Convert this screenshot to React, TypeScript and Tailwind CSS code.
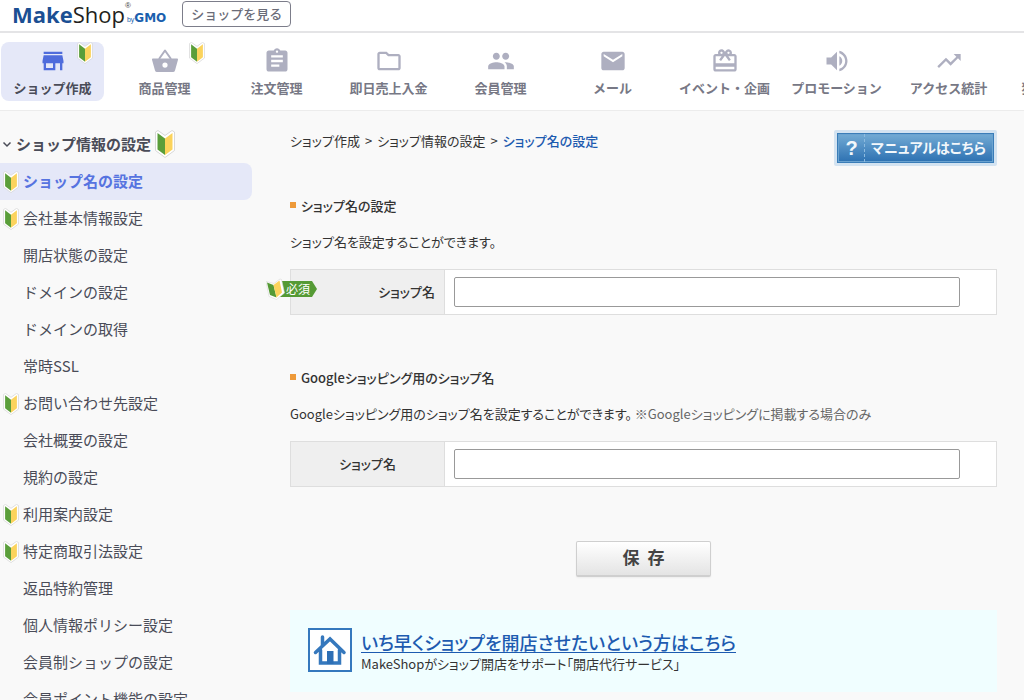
import type { ReactNode } from "react";
import {
  MdAssignment,
  MdCardGiftcard,
  MdEmail,
  MdExtension,
  MdOutlineFolder,
  MdPeople,
  MdStore,
  MdTrendingUp,
  MdVolumeUp,
} from "react-icons/md";

function BeginnerMark({ className }: { className: string }) {
  return (
    <svg viewBox="0 0 20 28" className={className} aria-hidden="true">
      <path d="M0.500 2 L3 0.500 L10 5.500 L17 0.500 L19.500 2 V20.500 L10 27.500 L0.500 20.500 Z" fill="#fff" stroke="#d4d4d4" strokeWidth="0.9" strokeLinejoin="round" />
      <path d="M2.500 3 L10 8.500 V25 L2.500 19.500 Z" fill="#5a9e3a" />
      <path d="M17.500 3 L10 8.500 V25 L17.500 19.500 Z" fill="#fbd35c" />
    </svg>
  );
}

function BasketIcon() {
  return (
    <svg viewBox="0 0 28 28" className="size-[1em]" fill="none" aria-hidden="true">
      <path d="M8 12 L14 3.500 L20 12" stroke="currentColor" strokeWidth="2" strokeLinejoin="round" />
      <path
        d="M2 11.500 H26 Q27.300 11.500 27 12.800 L24 23.500 Q23.500 25 22 25 H6 Q4.500 25 4 23.500 L1 12.800 Q0.700 11.500 2 11.500 Z M14 15.500 A2.600 2.600 0 1 0 14 20.700 A2.600 2.600 0 1 0 14 15.500 Z"
        fill="currentColor"
        fillRule="evenodd"
      />
    </svg>
  );
}

const navItems: { label: string; icon: ReactNode; mark?: boolean; active?: boolean }[] = [
  { label: "ショップ作成", icon: <MdStore />, mark: true, active: true },
  { label: "商品管理", icon: <BasketIcon />, mark: true },
  { label: "注文管理", icon: <MdAssignment /> },
  { label: "即日売上入金", icon: <MdOutlineFolder /> },
  { label: "会員管理", icon: <MdPeople /> },
  { label: "メール", icon: <MdEmail /> },
  { label: "イベント・企画", icon: <MdCardGiftcard /> },
  { label: "プロモーション", icon: <MdVolumeUp /> },
  { label: "アクセス統計", icon: <MdTrendingUp /> },
  { label: "独自機能設定", icon: <MdExtension /> },
];

const sideItems: { label: string; mark?: boolean; active?: boolean }[] = [
  { label: "ショップ名の設定", mark: true, active: true },
  { label: "会社基本情報設定", mark: true },
  { label: "開店状態の設定" },
  { label: "ドメインの設定" },
  { label: "ドメインの取得" },
  { label: "常時SSL" },
  { label: "お問い合わせ先設定", mark: true },
  { label: "会社概要の設定" },
  { label: "規約の設定" },
  { label: "利用案内設定", mark: true },
  { label: "特定商取引法設定", mark: true },
  { label: "返品特約管理" },
  { label: "個人情報ポリシー設定" },
  { label: "会員制ショップの設定" },
  { label: "会員ポイント機能の設定" },
];

function Logo() {
  return (
    <a href="#" className="flex whitespace-nowrap" aria-label="MakeShop byGMO">
      <span className="font-['Open_Sans','Noto_Sans',sans-serif] text-[22px] leading-7 text-[#231f20]">
        <b className="text-[#1b4f93]">Make</b>Shop
      </span>
      <span className="flex h-6 flex-col justify-between text-[#1b5fae]">
        <span className="font-['Liberation_Sans',sans-serif] text-[8px] leading-3 text-[#444]">®</span>
        <span className="flex items-baseline pl-0.5 leading-3">
          <span className="font-['Liberation_Sans',sans-serif] text-[7px]">by</span>
          <span className="font-['DejaVu_Sans',sans-serif] text-xs leading-3 font-bold">GMO</span>
        </span>
      </span>
    </a>
  );
}

function SectionTitle({ children }: { children: ReactNode }) {
  return (
    <h2 className="flex items-center gap-[5px] text-[13px] leading-5 font-medium">
      <span className="mb-0.5 size-1.5 bg-[#ee9a3a]" />
      {children}
    </h2>
  );
}

function RequiredBadge() {
  return (
    <span className="absolute top-[7px] -left-[25px] flex h-6 w-14 items-center" role="img" aria-label="必須">
      <svg viewBox="0 0 56 24" className="absolute inset-0 size-full" aria-hidden="true">
        <path d="M12 4 H46 L51 12 L46 20 H12 Z" fill="#559a35" />
        <path d="M0 4.500 L8 6.500 L14 2 L15.500 2.500 L18.500 16 L10.500 22.500 L3 19.500 Z" fill="#fff" stroke="#d8d8d8" strokeWidth="0.6" />
        <path d="M1 5.500 L7.500 8 L10.500 20.500 L4 18 Z" fill="#559a35" />
        <path d="M7.500 8 L13.500 3.500 L16 15.500 L10.500 20.500 Z" fill="#fbd35c" />
      </svg>
      <span className="relative pl-5 text-xs leading-6 font-normal text-white">必須</span>
    </span>
  );
}

function FieldTable({ id, required }: { id: string; required?: boolean }) {
  return (
    <table className="w-full border-collapse border border-[#dedede] bg-white">
      <tbody>
        <tr>
          <th
            scope="row"
            className={
              required
                ? "relative w-[154px] border border-[#dedede] bg-[#efefef] pr-[9px] text-right font-medium"
                : "relative w-[154px] border border-[#dedede] bg-[#efefef] text-center font-medium"
            }
          >
            {required && <RequiredBadge />}
            <label htmlFor={id} className="text-[13px]">ショップ名</label>
          </th>
          <td className="py-[7px] pr-9 pl-[9px]">
            <input id={id} type="text" className="block h-[30px] w-full rounded-xs border border-[#999] bg-white px-2 text-sm" />
          </td>
        </tr>
      </tbody>
    </table>
  );
}

export default function App() {
  return (
    <div className="flex h-screen flex-col overflow-hidden bg-[#f9f9f9] font-['Noto_Sans_CJK_JP',sans-serif] text-[#333]">
      <header className="flex h-[33px] shrink-0 items-start gap-4 border-b-2 border-[#e4e4e6] bg-white pl-3">
        <Logo />
        <button type="button" className="mt-px h-[26px] rounded border border-[#7c7d8a] px-2 text-[13px] leading-5 font-medium text-[#6b6c78]">
          ショップを見る
        </button>
      </header>

      <nav className="flex h-[78px] shrink-0 gap-[9px] overflow-hidden border-b border-[#ececec] bg-white pt-[9px] pl-px">
        {navItems.map((item) => (
          <a
            key={item.label}
            href="#"
            className={
              item.active
                ? "relative flex h-[59px] w-[103px] shrink-0 flex-col items-center rounded-lg bg-[#e5e8f8] pt-[5px] text-[#4a4c58]"
                : "relative flex h-[59px] w-[103px] shrink-0 flex-col items-center rounded-lg pt-[5px] text-[#777885]"
            }
          >
            <span className={item.active ? "text-[28px] text-[#4f6cdc]" : "text-[28px] text-[#aeafc0]"}>{item.icon}</span>
            <span className="text-[13px] leading-[25px] font-bold whitespace-nowrap">{item.label}</span>
            {item.mark && <BeginnerMark className="absolute top-0 right-[11px] h-[22px] w-4" />}
          </a>
        ))}
      </nav>

      <div className="flex min-h-0 flex-1">
        <aside className="w-[252px] shrink-0 pt-[15px]">
          <h2 className="flex h-[37px] items-center gap-1 pl-0.5 text-[15px] font-bold text-[#4a4c58]">
            <svg viewBox="0 0 10 10" className="size-2.5 fill-none stroke-[#4a4c58] stroke-[1.5]" aria-hidden="true">
              <path d="M1.500 2.500 L5 6 L8.500 2.500" />
            </svg>
            ショップ情報の設定
            <BeginnerMark className="mb-0.5 h-7 w-5" />
          </h2>
          <ul>
            {sideItems.map((item) => (
              <li key={item.label}>
                <a
                  href="#"
                  className={
                    item.active
                      ? "flex h-[37px] items-center gap-1 rounded-r-lg bg-[#e5e8f8] pl-[3px] text-[15px] font-bold text-[#5673e0]"
                      : "flex h-[37px] items-center gap-1 pl-[3px] text-[15px] text-[#4a4c58]"
                  }
                >
                  <span className="w-4">{item.mark && <BeginnerMark className="h-[22px] w-4" />}</span>
                  {item.label}
                </a>
              </li>
            ))}
          </ul>
        </aside>

        <main className="min-w-0 flex-1 pt-[19px] pr-[27px] pl-[38px] text-[13px] leading-5 [font-feature-settings:'palt']">
          <div className="flex h-[66px] items-start justify-between">
            <div className="flex gap-[5px] pt-px">
              <span>ショップ作成</span>
              <span>&gt;</span>
              <span>ショップ情報の設定</span>
              <span>&gt;</span>
              <b className="font-medium text-[#1d5bb0]">ショップ名の設定</b>
            </div>
            <a href="#" className="flex h-9 w-[163px] items-stretch rounded-xs border-3 border-[#d3e3f1] bg-[#3a7db8] p-px">
              <span className="flex flex-1 items-center border border-[#6ba3d0] bg-linear-to-b from-[#70a9d3] to-[#2f73b3] text-[#f2f7fb]">
                <span className="w-[26px] border-r border-dashed border-[#8dbbdf] text-center font-['Liberation_Sans',sans-serif] text-xl leading-7 font-bold">?</span>
                <span className="flex-1 pb-0.5 text-center text-sm font-bold whitespace-nowrap">マニュアルはこちら</span>
              </span>
            </a>
          </div>

          <SectionTitle>ショップ名の設定</SectionTitle>
          <p className="mt-4 mb-[17px]">ショップ名を設定することができます。</p>
          <FieldTable id="shop-name" required />

          <div className="h-[53px]" />
          <SectionTitle>Googleショッピング用のショップ名</SectionTitle>
          <p className="mt-4 mb-[17px]">
            Googleショッピング用のショップ名を設定することができます。 <span className="text-[#666]">※Googleショッピングに掲載する場合のみ</span>
          </p>
          <FieldTable id="google-shop-name" />

          <div className="mt-[54px] flex justify-center">
            <button type="button" className="flex h-9 w-[135px] items-center justify-center gap-2 rounded-xs border border-b-2 border-[#cfcfcf] bg-linear-to-b from-white to-[#e4e4e4] pb-1 text-[17px] font-bold text-[#444] shadow-xs">
              <span>保</span>
              <span>存</span>
            </button>
          </div>

          <section className="mt-[33px] flex h-[82px] items-center gap-[9px] bg-[#f0feff] pb-0.5 pl-[18px]">
            <svg viewBox="0 0 44 44" className="size-11 shrink-0" aria-hidden="true">
              <rect x="1" y="1" width="42" height="42" fill="#fff" stroke="#3578bd" strokeWidth="2" />
              <path
                d="M7.500 24.500 L22 11 L36 24.500 M14.500 17 V9 M12.500 22 V35 H31.500 V22"
                fill="none"
                stroke="#3578bd"
                strokeWidth="3.500"
                strokeLinecap="round"
              />
              <path d="M19 23 H25.500 V36 H19 Z" fill="#2d6fb5" />
            </svg>
            <div className="pt-1">
              <a href="#" className="block text-lg leading-6 font-medium text-[#1d5bb0] underline underline-offset-2">いち早くショップを開店させたいという方はこちら</a>
              <p>MakeShopがショップ開店をサポート「開店代行サービス」</p>
            </div>
          </section>
        </main>
      </div>
    </div>
  );
}
